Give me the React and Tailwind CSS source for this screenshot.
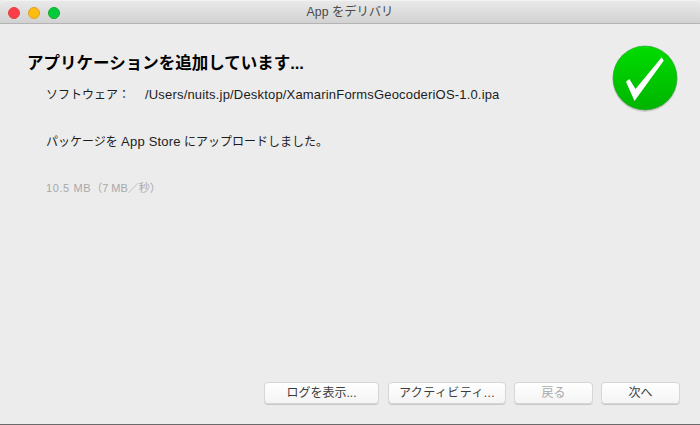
const FONT = '"Liberation Sans", "Noto Sans CJK JP", sans-serif';

function Btn({ label, width, disabled }) {
  return (
    <button
      style={{ fontFamily: FONT }}
      className={`h-[22px] rounded-[4px] border border-[#d6d6d6] bg-gradient-to-b from-white to-[#f4f4f4] text-[12px] leading-none shadow-[0_1px_0_#c8c8c8] ${width} ${
        disabled ? 'text-[#a9a9a9]' : 'text-[#3c3c3c]'
      }`}
    >
      {label}
    </button>
  );
}

function CheckBadge() {
  return (
    <svg width="70" height="70" viewBox="0 0 70 70">
      <defs>
        <linearGradient id="green" x1="0" y1="0" x2="0" y2="1">
          <stop offset="0" stopColor="#00dc00" />
          <stop offset="1" stopColor="#00b400" />
        </linearGradient>
      </defs>
      <circle cx="35" cy="35.5" r="32.5" fill="#000" opacity="0.12" />
      <circle cx="35" cy="34" r="32" fill="url(#green)" stroke="#2f9a2f" strokeWidth="0.6" />
      <path d="M16 37.7 L19.3 35 L25.5 45 L51.7 13.3 L53.7 16.7 L24.5 57 Z" fill="#fff" />
    </svg>
  );
}

export default function App() {
  return (
    <div style={{ fontFamily: FONT }} className="flex h-[425px] w-[700px] flex-col overflow-hidden bg-[#ececec]">
      <div className="relative flex h-[24px] shrink-0 items-center justify-center rounded-t-[5px] border-b border-[#b4b4b4] border-t border-t-[#f2f2f2] bg-gradient-to-b from-[#e9e9e9] to-[#d2d2d2]">
        <div className="absolute left-[8px] top-[6px] flex gap-[8px]">
          <span className="h-[12px] w-[12px] rounded-full border border-[#e2453f] bg-[#fc3d48]" />
          <span className="h-[12px] w-[12px] rounded-full border border-[#e0a028] bg-[#fdbc0f]" />
          <span className="h-[12px] w-[12px] rounded-full border border-[#12ac28] bg-[#05cb3c]" />
        </div>
        <span className="pt-[1px] text-[12.3px] leading-none text-[#4a4a4a]">App をデリバリ</span>
      </div>

      <div className="flex flex-1 flex-col">
        <div className="flex items-start justify-between pl-[27px] pr-[20px] pt-[29px]">
          <div className="flex flex-col">
            <h1 className="text-[16.5px] font-bold leading-[20px] text-black">アプリケーションを追加しています...</h1>
            <div className="mt-[14px] flex items-center pl-[19px] text-[12px] leading-[16px] text-[#1c1c1c]">
              <span className="w-[99px]">ソフトウェア：</span>
              <span className="text-[13px] tracking-[0.18px]">/Users/nuits.jp/Desktop/XamarinFormsGeocoderiOS-1.0.ipa</span>
            </div>
            <p className="mt-[31px] pl-[19px] text-[12px] leading-[16px] text-[#1c1c1c]">
              パッケージを <span className="text-[13px] tracking-[0.2px]">App Store</span> にアップロードしました。
            </p>
            <p className="mt-[31px] pl-[19px] text-[11px] leading-[14px] text-[#a8a8a8]">
              <span className="tracking-[0.6px]">10.5 MB</span>（7 MB／秒）
            </p>
          </div>
          <div className="-mt-[9px]">
            <CheckBadge />
          </div>
        </div>

        <div className="mt-auto flex justify-end gap-[8px] pb-[20px] pr-[20px]">
          <Btn label="ログを表示..." width="w-[115px] mr-[1px]" />
          <Btn label="アクティビティ..." width="w-[118px] tracking-[0.4px]" />
          <Btn label="戻る" width="w-[79px]" disabled />
          <Btn label="次へ" width="w-[79px]" />
        </div>
      </div>
      <div className="h-[1px] shrink-0 bg-[#6a6a6a]" />
    </div>
  );
}
